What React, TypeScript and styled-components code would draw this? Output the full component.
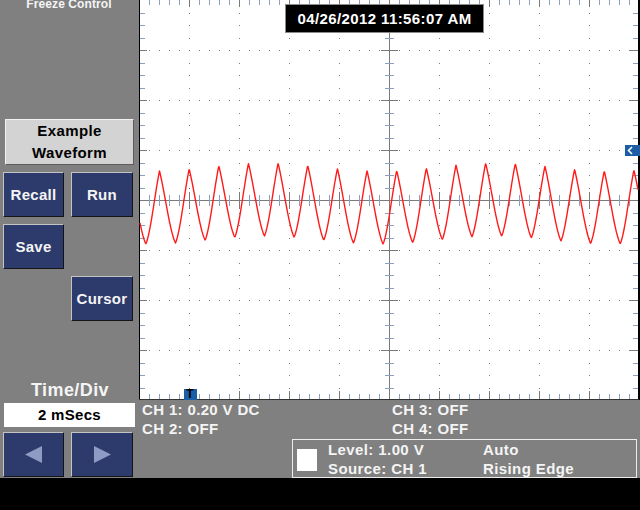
import React from "react";
import styled, { createGlobalStyle } from "styled-components";

const GlobalStyle = createGlobalStyle`
  html, body { margin: 0; padding: 0; background: #000; }
  body { font-family: "Liberation Sans", Arial, sans-serif; }
`;

const FONT = `"Liberation Sans", Arial, sans-serif`;
const TICK = "#8d9fbe";
const GRID = "#7b7b7b";
const MARK = "#1c5ea6";

/* ---------- frame ---------- */

const Screen = styled.div`
  width: 640px;
  height: 510px;
  display: flex;
  flex-direction: column;
  background: #000;
  overflow: hidden;
  font-family: ${FONT};
`;

const Workspace = styled.div`
  height: 478px;
  display: grid;
  grid-template-columns: 139px 501px;
  background: #808080;
`;

const Footer = styled.div`
  height: 32px;
  background: #000;
`;

/* ---------- side panel ---------- */

const SidePanel = styled.aside`
  display: flex;
  flex-direction: column;
  padding-left: 3px;
  color: #f4f4f4;
  font-weight: bold;
`;

const PanelTitle = styled.div`
  height: 8px;
  line-height: 8px;
  font-size: 12px;
  text-align: center;
  padding-right: 4px;
  white-space: nowrap;
  letter-spacing: 0.1px;
`;

const PresetButton = styled.button`
  margin: 111px 0 0 2px;
  width: 129px;
  height: 46px;
  box-sizing: border-box;
  padding: 0;
  background: #d3d3d3;
  border: 1px solid;
  border-color: #f2f2f2 #5c5c5c #5c5c5c #f2f2f2;
  color: #000;
  font: bold 15px/22px ${FONT};
  letter-spacing: 0.4px;
`;

const KeyGrid = styled.div`
  margin-top: 7px;
  display: grid;
  grid-template-columns: 61px 62px;
  grid-auto-rows: 45px;
  gap: 7px;
`;

const Key = styled.button<{ $col: number; $row: number }>`
  grid-column: ${(p) => p.$col};
  grid-row: ${(p) => p.$row};
  display: flex;
  align-items: center;
  justify-content: center;
  box-sizing: border-box;
  padding: 0;
  background: #2d3a6c;
  border: 1px solid;
  border-color: #c4c4c4 #151515 #151515 #c4c4c4;
  color: #f4f4f4;
  font: bold 15px ${FONT};
  letter-spacing: 0.3px;
`;

const TimebaseGroup = styled.div`
  margin-top: auto;
  padding-bottom: 1px;
  display: flex;
  flex-direction: column;
`;

const TimebaseLabel = styled.div`
  font-size: 18px;
  line-height: 22px;
  text-align: center;
  padding-right: 2px;
  letter-spacing: 0.4px;
`;

const TimebaseValue = styled.div`
  margin: 2px 0 0 1px;
  width: 131px;
  height: 24px;
  background: #fff;
  color: #000;
  font-size: 15px;
  line-height: 24px;
  text-align: center;
  letter-spacing: 0.3px;
`;

const ArrowRow = styled(KeyGrid)`
  margin-top: 5px;
`;

const Arrow = ({ dir }: { dir: "left" | "right" }) => (
  <svg width="17" height="17" viewBox="0 0 17 17">
    <polygon
      points={dir === "left" ? "0,8.5 17,0 17,17" : "17,8.5 0,0 0,17"}
      fill="#8e9bc4"
    />
  </svg>
);

/* ---------- scope ---------- */

const ScopeColumn = styled.section`
  display: flex;
  flex-direction: column;
`;

const Plot = styled.div`
  position: relative;
  width: 501px;
  height: 400px;
  background: #fff;
`;

const Clock = styled.div`
  position: absolute;
  left: 146px;
  top: 4px;
  width: 199px;
  height: 29px;
  box-sizing: border-box;
  background: #000;
  border: 1px solid #8a8a8a;
  color: #fff;
  font: bold 15px/27px ${FONT};
  letter-spacing: 0.4px;
  text-align: center;
  white-space: nowrap;
`;

const Readout = styled.div`
  padding-left: 3px;
  color: #f4f4f4;
  font: bold 15px/19px ${FONT};
  letter-spacing: 0.35px;
  white-space: nowrap;
`;

const ChannelGrid = styled.div`
  display: grid;
  grid-template-columns: 250px auto;
`;

const TriggerBox = styled.div`
  margin: 1px 0 0 150px;
  width: 345px;
  height: 39px;
  box-sizing: border-box;
  border: 1px solid #ececec;
  display: flex;
  align-items: flex-start;
`;

const TriggerSwatch = styled.div`
  width: 20px;
  height: 22px;
  margin: 9px 0 0 4px;
  background: #fff;
`;

const TriggerInfo = styled.div`
  margin-left: 11px;
  display: grid;
  grid-template-columns: 155px auto;
  letter-spacing: 0.4px;
`;

/* graticule: 10 x 8 divisions of 50px */
const W = 500;
const H = 400;

function buildGraticule() {
  const r: React.ReactElement[] = [];
  let n = 0;
  const rect = (x: number, y: number, w: number, h: number, fill: string) =>
    r.push(<rect key={n++} x={x} y={y} width={w} height={h} fill={fill} />);

  // dotted division lines
  for (let m = 1; m < 8; m++) {
    if (m === 4) continue;
    for (let k = 1; k < 50; k++) rect(k * 10, m * 50, 1, 1, GRID);
  }
  for (let m = 1; m < 10; m++) {
    if (m === 5) continue;
    for (let j = 1; j < 32; j++) rect(m * 50, Math.round(j * 12.5), 1, 1, GRID);
  }

  // edge ticks, top and bottom
  for (let k = 1; k < 50; k++) {
    const x = k * 10;
    if (k % 5 === 0) {
      rect(x, 0, 1, 7, GRID);
      rect(x, 391, 1, 8, GRID);
    } else {
      rect(x, 0, 1, 5, TICK);
      rect(x, 394, 1, 5, TICK);
    }
  }
  // edge ticks, left and right
  for (let j = 1; j < 32; j++) {
    const y = Math.round(j * 12.5);
    if (j % 4 === 0) {
      rect(1, y, 7, 1, GRID);
      rect(491, y, 8, 1, GRID);
    } else {
      rect(1, y, 5, 1, TICK);
      rect(494, y, 5, 1, TICK);
    }
  }

  // centre axes
  rect(0, 200, W, 1, GRID);
  rect(250, 0, 1, H, GRID);
  for (let k = 1; k < 50; k++) {
    if (k % 5 === 0) {
      if (k !== 25) rect(k * 10, 192, 1, 17, GRID);
    } else rect(k * 10, 195, 1, 11, TICK);
  }
  for (let j = 1; j < 32; j++) {
    const y = Math.round(j * 12.5);
    if (j % 4 === 0) {
      if (j !== 16) rect(242, y, 17, 1, GRID);
    } else rect(246, y, 9, 1, TICK);
  }

  // frame
  rect(0, 0, 1, H, "#000");
  rect(499, 0, 2, H, "#000");
  rect(0, 399, W, 1, "#333");
  return r;
}

/* CH1 trace: pointed crests, softened troughs and a slow baseline drift */
function buildTrace() {
  const period = 29.65;
  const peak0 = 20.5;
  const fall = 0.54;
  const pts: string[] = [];
  for (let x = 1; x <= 499; x += 0.5) {
    let t = ((x - peak0) / period) % 1;
    if (t < 0) t += 1;
    // s: 0 at crest, 1 at trough
    const s = t < fall ? t / fall : 1 - (t - fall) / (1 - fall);
    const tri = 1 - 2 * s;
    const round = Math.cos(Math.PI * s);
    const cusp = 1 - 2 * Math.sin((Math.PI * s) / 2);
    const f = 0.45 * tri + 0.25 * round + 0.3 * cusp;
    const base = 203.5 + 4 * Math.cos((2 * Math.PI * (x + 139 - 150)) / 230);
    const y = base - 36.5 * f;
    pts.push(`${x.toFixed(1)},${y.toFixed(1)}`);
  }
  return "M" + pts.join("L");
}

const graticule = buildGraticule();
const trace = buildTrace();

const ScopeDisplay = () => (
  <svg width={501} height={H} viewBox={`0 0 501 ${H}`} style={{ display: "block" }}>
    <g shapeRendering="crispEdges">{graticule}</g>
    <path d={trace} fill="none" stroke="#ff1a1a" strokeWidth={1.4} strokeLinejoin="round" />
    {/* channel 1 level marker */}
    <rect x={486} y={145} width={15} height={11} fill={MARK} />
    <polyline points="493,147 489.5,150.5 493,154" fill="none" stroke="#fff" strokeWidth={1.6} />
    {/* trigger position marker */}
    <rect x={45} y={389} width={13} height={11} fill={MARK} />
    <text
      x={51}
      y={398}
      textAnchor="middle"
      fontFamily={FONT}
      fontWeight="bold"
      fontSize={12}
      fill="#000"
    >
      T
    </text>
  </svg>
);

export default function App() {
  return (
    <>
      <GlobalStyle />
      <Screen>
        <Workspace>
          <SidePanel>
            <PanelTitle>Freeze Control</PanelTitle>
            <PresetButton>
              Example
              <br />
              Waveform
            </PresetButton>
            <KeyGrid>
              <Key $col={1} $row={1}>Recall</Key>
              <Key $col={2} $row={1}>Run</Key>
              <Key $col={1} $row={2}>Save</Key>
              <Key $col={2} $row={3}>Cursor</Key>
            </KeyGrid>
            <TimebaseGroup>
              <TimebaseLabel>Time/Div</TimebaseLabel>
              <TimebaseValue>2 mSecs</TimebaseValue>
              <ArrowRow>
                <Key $col={1} $row={1}>
                  <Arrow dir="left" />
                </Key>
                <Key $col={2} $row={1}>
                  <Arrow dir="right" />
                </Key>
              </ArrowRow>
            </TimebaseGroup>
          </SidePanel>
          <ScopeColumn>
            <Plot>
              <ScopeDisplay />
              <Clock>04/26/2012 11:56:07 AM</Clock>
            </Plot>
            <Readout>
              <ChannelGrid>
                <span>CH 1: 0.20 V DC</span>
                <span>CH 3: OFF</span>
                <span>CH 2: OFF</span>
                <span>CH 4: OFF</span>
              </ChannelGrid>
              <TriggerBox>
                <TriggerSwatch />
                <TriggerInfo>
                  <span>Level: 1.00 V</span>
                  <span>Auto</span>
                  <span>Source: CH 1</span>
                  <span>Rising Edge</span>
                </TriggerInfo>
              </TriggerBox>
            </Readout>
          </ScopeColumn>
        </Workspace>
        <Footer />
      </Screen>
    </>
  );
}
